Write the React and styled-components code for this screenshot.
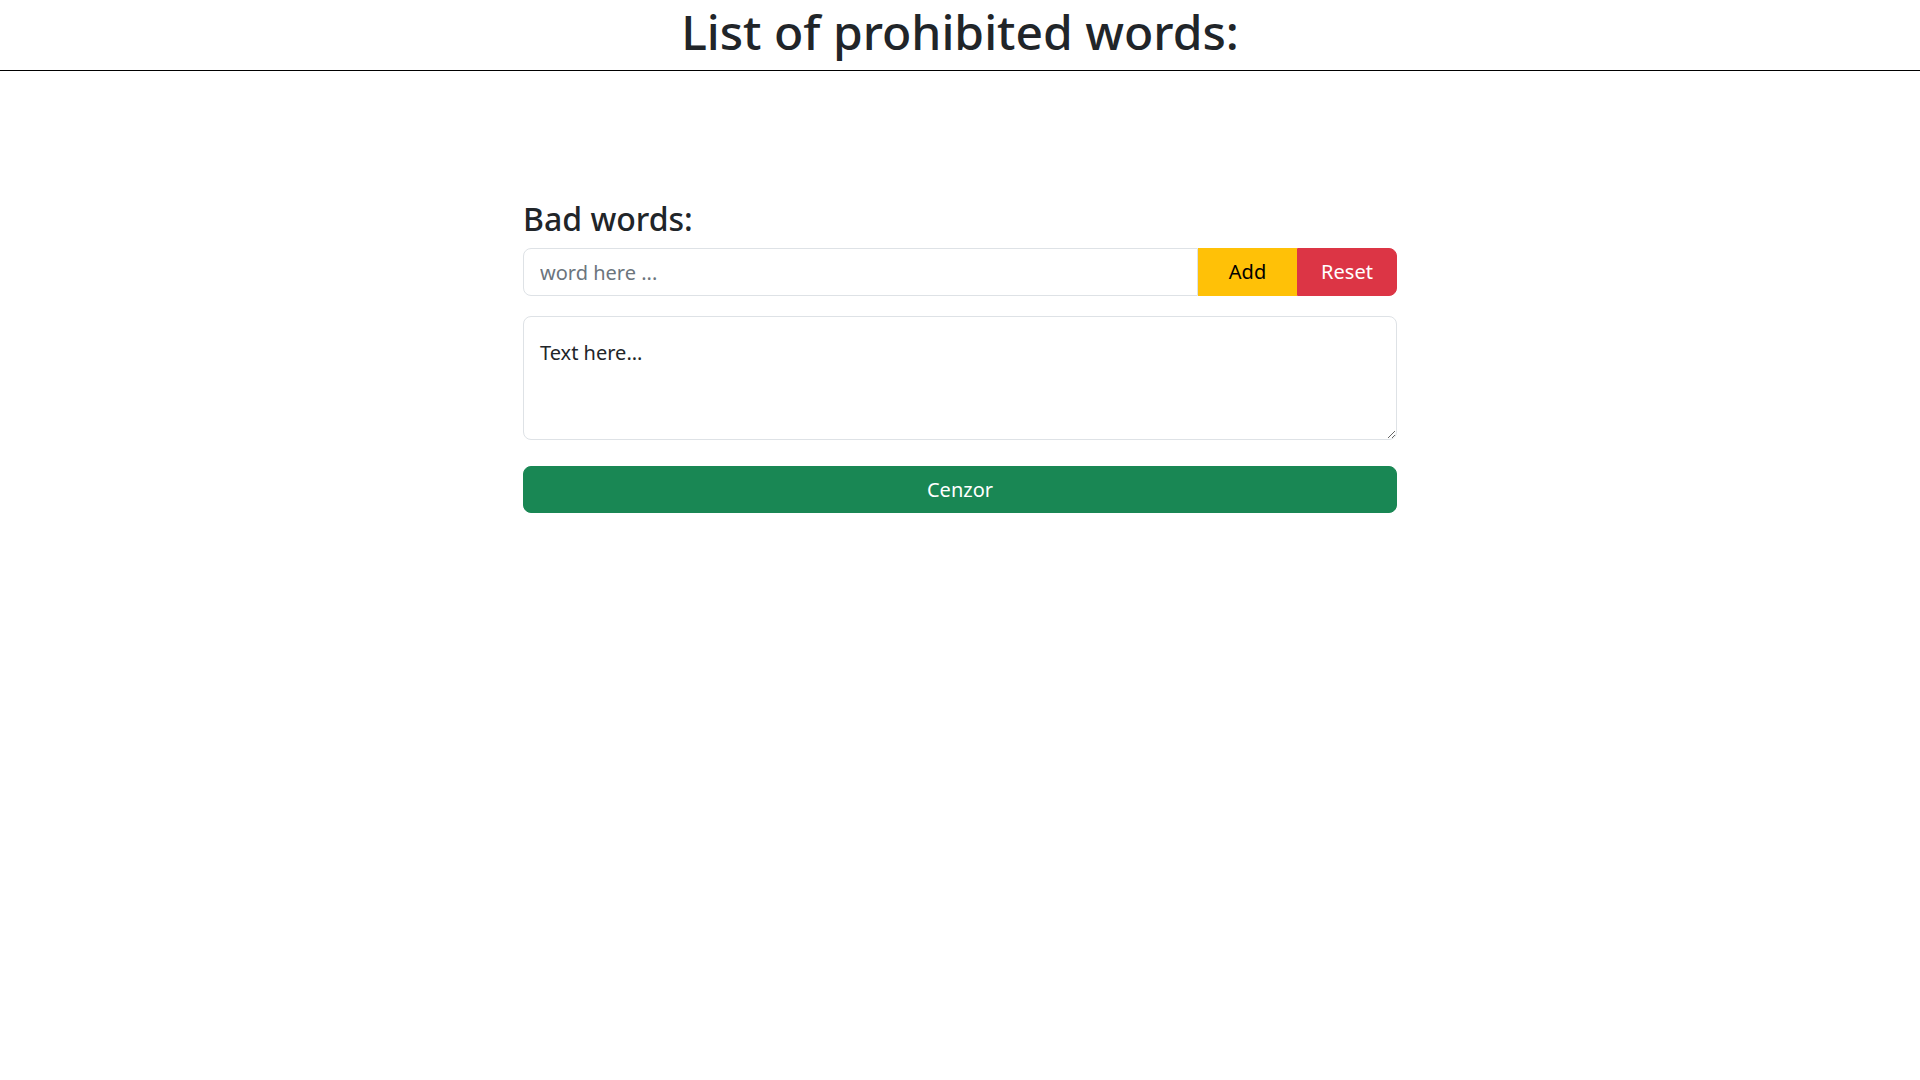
import React from "react";
import styled, { createGlobalStyle } from "styled-components";

const GlobalStyle = createGlobalStyle`
  * { box-sizing: border-box; }
  body {
    margin: 0;
    background: #fff;
    color: #212529;
    font-family: "Noto Sans", "Liberation Sans", sans-serif;
  }
`;

const Header = styled.header`
  border-bottom: 1px solid #000;
  height: 71px;
  padding-top: 3px;
  display: flex;
  justify-content: center;
`;

const Title = styled.h1`
  margin: 0;
  font-size: 48px;
  font-weight: 500;
  line-height: 1.2;
  color: #212529;
`;

const Main = styled.main`
  width: 874px;
  margin: 129px auto 0;
  display: flex;
  flex-direction: column;
`;

const SubTitle = styled.h2`
  margin: 0 0 10px;
  font-size: 32px;
  font-weight: 500;
  line-height: 1.2;
`;

const InputGroup = styled.div`
  display: flex;
  height: 48px;
  margin-bottom: 20px;
`;

const WordInput = styled.input`
  flex: 1;
  min-width: 0;
  font: inherit;
  font-size: 20px;
  color: #212529;
  padding: 8px 16px;
  border: 1px solid #dee2e6;
  border-radius: 8px 0 0 8px;
  outline: none;
  &::placeholder { color: #6c757d; }
`;

const Btn = styled.button`
  font: inherit;
  font-size: 20px;
  line-height: 1.5;
  padding: 8px 16px;
  border: 1px solid ${p => p.$bg};
  background: ${p => p.$bg};
  color: ${p => p.$fg};
  cursor: pointer;
`;

const GroupBtn = styled(Btn)`
  width: ${p => p.$w}px;
  border-radius: ${p => (p.$last ? "0 8px 8px 0" : "0")};
`;

const TextArea = styled.textarea`
  font: inherit;
  font-size: 20px;
  line-height: 1.5;
  color: #212529;
  height: 124px;
  padding: 21px 16px 11px;
  border: 1px solid #dee2e6;
  border-radius: 8px;
  resize: vertical;
  outline: none;
  margin-bottom: 26px;
`;

const WideBtn = styled(Btn)`
  width: 100%;
  height: 47px;
  border-radius: 8px;
`;

export default function App() {
  return (
    <>
      <GlobalStyle />
      <Header>
        <Title>List of prohibited words:</Title>
      </Header>
      <Main>
        <SubTitle>Bad words:</SubTitle>
        <InputGroup>
          <WordInput placeholder="word here ..." />
          <GroupBtn $bg="#ffc107" $fg="#000" $w={99}>Add</GroupBtn>
          <GroupBtn $bg="#dc3545" $fg="#fff" $w={100} $last>Reset</GroupBtn>
        </InputGroup>
        <TextArea defaultValue="Text here..." />
        <WideBtn $bg="#198754" $fg="#fff">Cenzor</WideBtn>
      </Main>
    </>
  );
}
